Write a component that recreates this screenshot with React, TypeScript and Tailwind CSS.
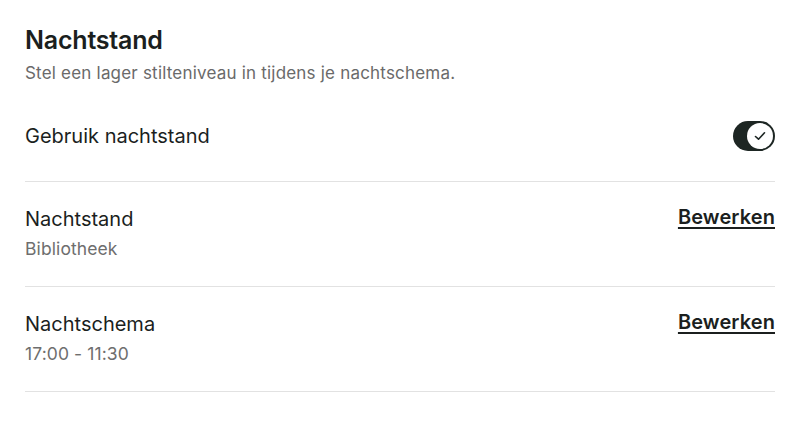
import React from "react";

function Toggle() {
  return (
    <div className="w-[42px] h-[30px] rounded-full bg-[#1d2623] flex items-center justify-end pr-[2px]">
      <div className="w-[26px] h-[26px] rounded-full bg-white flex items-center justify-center">
        <svg width="14" height="14" viewBox="0 0 14 14" fill="none">
          <path d="M2.5 7.5 L5.5 10.2 L11.5 3.8" stroke="#1d2623" strokeWidth="1.6" strokeLinecap="round" strokeLinejoin="round" />
        </svg>
      </div>
    </div>
  );
}

function Item({ title, sub }: { title: string; sub: string }) {
  return (
    <div className="flex justify-between items-start pt-[23px] pb-[25px] border-b border-[#e2e2e2]">
      <div className="flex flex-col">
        <div className="text-[20px] leading-[28px] text-[#1b1f1e]">{title}</div>
        <div className="text-[17.5px] leading-[24px] mt-[4px] text-[#6e6e6e] tracking-[0.1px]">{sub}</div>
      </div>
      <a className="text-[20px] leading-[24px] font-semibold text-[#1b1f1e] underline underline-offset-[3px] decoration-[1.5px] cursor-pointer tracking-[0.1px]">
        Bewerken
      </a>
    </div>
  );
}

export default function App() {
  return (
    <div className="w-[800px] h-[423px] bg-white px-[25px] pt-[24px]" style={{ fontFamily: "Inter, 'Noto Sans', sans-serif" }}>
      <h1 className="text-[25px] leading-[32px] font-semibold text-[#1b1f1e] tracking-[-0.2px]">Nachtstand</h1>
      <p className="text-[17px] leading-[24px] mt-[5px] text-[#6a6a6a] tracking-[0.2px]">
        Stel een lager stilteniveau in tijdens je nachtschema.
      </p>
      <div className="flex justify-between items-center mt-[36px] pb-[30px] border-b border-[#e2e2e2]">
        <div className="text-[20px] leading-[30px] text-[#1b1f1e]">Gebruik nachtstand</div>
        <Toggle />
      </div>
      <Item title="Nachtstand" sub="Bibliotheek" />
      <Item title="Nachtschema" sub="17:00 - 11:30" />
    </div>
  );
}
